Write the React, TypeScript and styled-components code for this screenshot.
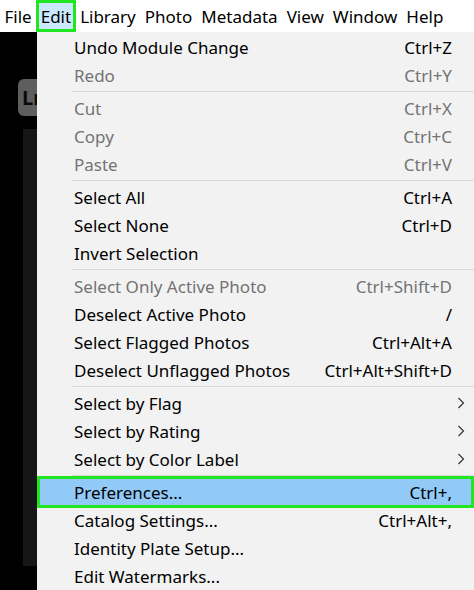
import React from 'react'
import styled, { createGlobalStyle, css } from 'styled-components'

const GlobalStyle = createGlobalStyle`
  html, body {
    margin: 0;
    padding: 0;
    background: #000;
  }
  body {
    font-family: 'Noto Sans', 'Open Sans', sans-serif;
  }
`

const Screen = styled.div`
  width: 474px;
  height: 590px;
  overflow: hidden;
  display: flex;
  flex-direction: column;
  background: #000;
`

const MenuBar = styled.div`
  height: 32px;
  flex: none;
  display: flex;
  align-items: stretch;
  background: #fff;
`

const MenuTitle = styled.div<{ $active?: boolean }>`
  display: flex;
  align-items: center;
  padding: 0 4.5px;
  font-size: 17px;
  color: #000;
  box-sizing: border-box;

  ${({ $active }) =>
    $active &&
    css`
      background: #cce8ff;
      border: 3px solid #22e622;
      padding: 0 1.5px;
    `}
`

const Body = styled.div`
  flex: 1;
  display: flex;
  min-height: 0;
`

const Backdrop = styled.div`
  width: 37px;
  flex: none;
  display: flex;
  flex-direction: column;
  overflow: hidden;
  background: #000;
`

const LogoTile = styled.div`
  margin: 47px 0 0 18px;
  width: 36px;
  height: 37px;
  flex: none;
  border-radius: 6px;
  background: #5e5e5e;
  color: #0a0a0a;
  font-weight: 700;
  font-size: 20px;
  display: flex;
  align-items: center;
  padding-left: 4px;
  box-sizing: border-box;
`

const Panel = styled.div`
  margin: 13px 0 0 23px;
  height: 437px;
  background: #161616;
`

const Menu = styled.div`
  flex: 1;
  background: #f2f2f2;
  padding-top: 1px;
  display: flex;
  flex-direction: column;
`

const Row = styled.div<{ $disabled?: boolean; $selected?: boolean }>`
  height: 28px;
  flex: none;
  display: flex;
  align-items: center;
  padding: 0 22px 0 37px;
  font-size: 17px;
  color: ${({ $disabled }) => ($disabled ? '#737373' : '#000')};
  box-sizing: border-box;

  ${({ $selected }) =>
    $selected &&
    css`
      background: #91c9f7;
      box-shadow: 0 0 0 3px #22e622 inset;
      height: 32px;
      margin: -2px 0;
    `}
`

const Label = styled.span`
  flex: 1;
  white-space: nowrap;
`

const Shortcut = styled.span`
  white-space: nowrap;
`

const Arrow = styled.svg`
  width: 8px;
  height: 12px;
  margin-right: -13px;
  fill: none;
  stroke: #333;
  stroke-width: 1.2;
`

const Separator = styled.div`
  height: 1px;
  flex: none;
  margin: 2px 0 2px 35px;
  background: #d9d9d9;
`

type Item =
  | { label: string; shortcut?: string; disabled?: boolean; submenu?: boolean; selected?: boolean }
  | 'sep'

const items: Item[] = [
  { label: 'Undo Module Change', shortcut: 'Ctrl+Z' },
  { label: 'Redo', shortcut: 'Ctrl+Y', disabled: true },
  'sep',
  { label: 'Cut', shortcut: 'Ctrl+X', disabled: true },
  { label: 'Copy', shortcut: 'Ctrl+C', disabled: true },
  { label: 'Paste', shortcut: 'Ctrl+V', disabled: true },
  'sep',
  { label: 'Select All', shortcut: 'Ctrl+A' },
  { label: 'Select None', shortcut: 'Ctrl+D' },
  { label: 'Invert Selection' },
  'sep',
  { label: 'Select Only Active Photo', shortcut: 'Ctrl+Shift+D', disabled: true },
  { label: 'Deselect Active Photo', shortcut: '/' },
  { label: 'Select Flagged Photos', shortcut: 'Ctrl+Alt+A' },
  { label: 'Deselect Unflagged Photos', shortcut: 'Ctrl+Alt+Shift+D' },
  'sep',
  { label: 'Select by Flag', submenu: true },
  { label: 'Select by Rating', submenu: true },
  { label: 'Select by Color Label', submenu: true },
  'sep',
  { label: 'Preferences...', shortcut: 'Ctrl+,', selected: true },
  { label: 'Catalog Settings...', shortcut: 'Ctrl+Alt+,' },
  { label: 'Identity Plate Setup...' },
  { label: 'Edit Watermarks...' },
]

const titles = ['File', 'Edit', 'Library', 'Photo', 'Metadata', 'View', 'Window', 'Help']

export default function App() {
  return (
    <>
      <GlobalStyle />
      <Screen>
        <MenuBar>
          {titles.map((t) => (
            <MenuTitle key={t} $active={t === 'Edit'}>
              {t}
            </MenuTitle>
          ))}
        </MenuBar>
        <Body>
          <Backdrop>
            <LogoTile>Lr</LogoTile>
            <Panel />
          </Backdrop>
          <Menu>
            {items.map((item, i) =>
              item === 'sep' ? (
                <Separator key={i} />
              ) : (
                <Row key={i} $disabled={item.disabled} $selected={item.selected}>
                  <Label>{item.label}</Label>
                  {item.shortcut && <Shortcut>{item.shortcut}</Shortcut>}
                  {item.submenu && (
                    <Arrow viewBox="0 0 8 12">
                      <path d="M1.5 1 L6.5 6 L1.5 11" />
                    </Arrow>
                  )}
                </Row>
              ),
            )}
          </Menu>
        </Body>
      </Screen>
    </>
  )
}
